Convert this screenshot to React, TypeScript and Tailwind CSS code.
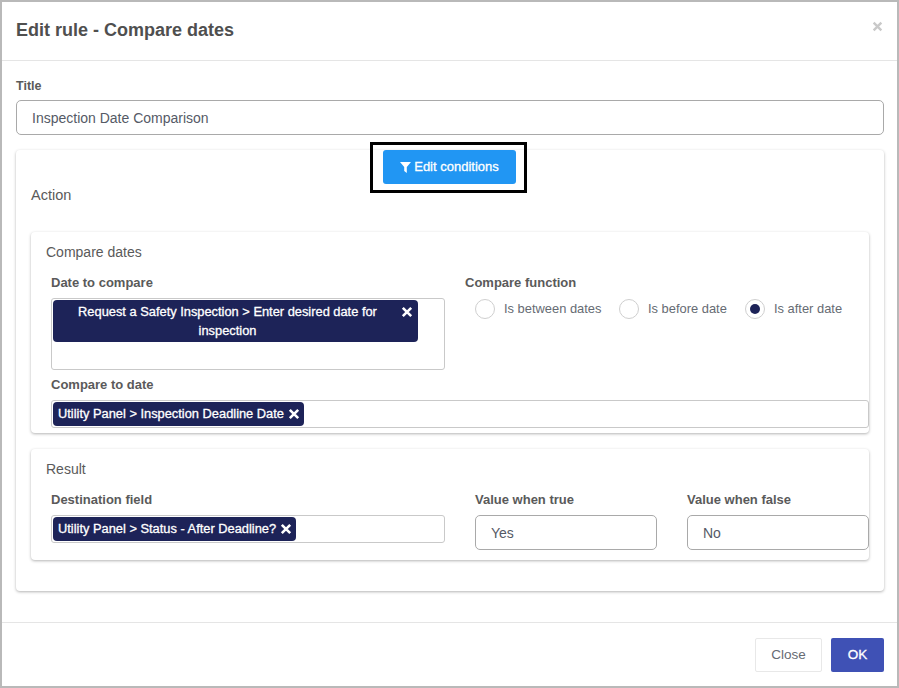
function XIcon({ size = 12, className }: { size?: number; className?: string }) {
  return (
    <svg width={size} height={size} viewBox="0 0 12 12" className={`shrink-0 ${className ?? ""}`}>
      <path d="M1.8 1.8L10.2 10.2M10.2 1.8L1.8 10.2" stroke="currentColor" strokeWidth="2.6" />
    </svg>
  );
}

function Chip({ label, wide }: { label: string; wide?: boolean }) {
  if (wide) {
    return (
      <span className="flex h-[42px] w-[365px] items-start rounded-[4px] bg-[#1d2358] pl-[7px] pt-[2px] text-center text-[12.85px] leading-[19px] text-white [-webkit-text-stroke:0.3px_white]">
        <span className="w-[335px]">{label}</span>
        <XIcon className="ml-[6px] mt-[4px]" />
      </span>
    );
  }
  return (
    <span className="flex h-[24px] items-center whitespace-nowrap rounded-[4px] bg-[#1d2358] pl-[5px] pr-[4px] text-[12.85px] text-white [-webkit-text-stroke:0.3px_white]">
      {label}
      <XIcon className="ml-[4px]" />
    </span>
  );
}

function FieldLabel({ children }: { children: string }) {
  return <div className="text-[13px] font-bold leading-[16px] text-[#5a5a5a]">{children}</div>;
}

function Radio({ label, checked, width }: { label: string; checked?: boolean; width: string }) {
  return (
    <div className={`flex items-center ${width}`}>
      <span className="flex h-[20px] w-[20px] shrink-0 items-center justify-center rounded-full border border-[#cfcfcf] bg-white">
        {checked && <span className="h-[10px] w-[10px] rounded-full bg-[#1d2358]" />}
      </span>
      <span className="ml-[9px] whitespace-nowrap text-[12.9px] text-[#666b73]">{label}</span>
    </div>
  );
}

function TextBox({ value, className }: { value: string; className: string }) {
  return (
    <div className={`flex h-[35px] items-center rounded-[5px] border border-[#a9a9a9] bg-white pl-[15px] pt-px text-[14px] text-[#555a66] ${className}`}>
      {value}
    </div>
  );
}

export default function App() {
  return (
    <div className="flex h-[688px] w-[899px] flex-col overflow-hidden border-2 border-[#b9b9b9] bg-white font-['Liberation_Sans',Arial,sans-serif]">
      {/* header */}
      <div className="flex h-[59px] shrink-0 items-start justify-between border-b border-[#e5e5e5] pl-[14px] pr-[14px]">
        <h1 className="pt-[18px] text-[18px] font-bold leading-[21px] text-[#4f4f4f]">Edit rule - Compare dates</h1>
        <XIcon size={11} className="mt-[19px] text-[#c9c9c9]" />
      </div>

      {/* body */}
      <div className="flex-1 px-[14px] pt-[17px]">
        <div className="text-[12.5px] font-bold leading-[16px] text-[#5a5a5a]">Title</div>
        <TextBox value="Inspection Date Comparison" className="mt-[6px] w-[868px]" />

        <div className="mt-[15px] h-[441px] w-[868px] rounded-[4px] bg-white px-[15px] shadow-[0_1px_3px_rgba(0,0,0,0.3)]">
          <div className="flex justify-center">
            <button className="relative -ml-px flex h-[34px] w-[133px] items-center justify-center rounded-[3px] bg-[#2196f3] text-[13px] text-white [-webkit-text-stroke:0.3px_white]">
              <svg width="11" height="11" viewBox="0 0 11 11" className="mr-[3px]">
                <path d="M0 0H11L6.8 5V11L4.2 9V5Z" fill="currentColor" />
              </svg>
              Edit conditions
              <span className="absolute -bottom-[9px] -left-[13px] -right-[11px] -top-[8px] border-[3px] border-black" />
            </button>
          </div>
          <div className="mt-[2px] text-[14.5px] leading-[18px] text-[#5a5a5a]">Action</div>

          {/* compare dates */}
          <section className="mt-[28px] h-[201px] w-[838px] rounded-[4px] bg-white pl-[15px] pt-[12px] shadow-[0_1px_3px_rgba(0,0,0,0.3)]">
            <div className="text-[14px] leading-[16px] text-[#5a5a5a]">Compare dates</div>
            <div className="ml-[5px] mt-[15px] flex">
              <div className="w-[394px]">
                <FieldLabel>Date to compare</FieldLabel>
                <div className="mt-[7px] h-[72px] rounded-[3px] border border-[#c9c9c9] p-px">
                  <Chip wide label="Request a Safety Inspection > Enter desired date for inspection" />
                </div>
              </div>
              <div className="ml-[20px]">
                <FieldLabel>Compare function</FieldLabel>
                <div className="ml-[10px] mt-[8px] flex">
                  <Radio label="Is between dates" width="w-[144px]" />
                  <Radio label="Is before date" width="w-[126px]" />
                  <Radio label="Is after date" checked width="w-[110px]" />
                </div>
              </div>
            </div>
            <div className="ml-[5px] mt-[7px]">
              <FieldLabel>Compare to date</FieldLabel>
              <div className="mt-[7px] flex h-[28px] w-[818px] items-center rounded-[3px] border border-[#c9c9c9] px-px">
                <Chip label="Utility Panel > Inspection Deadline Date" />
              </div>
            </div>
          </section>

          {/* result */}
          <section className="mt-[16px] h-[111px] w-[838px] rounded-[4px] bg-white pl-[15px] pt-[12px] shadow-[0_1px_3px_rgba(0,0,0,0.3)]">
            <div className="text-[14px] leading-[16px] text-[#5a5a5a]">Result</div>
            <div className="ml-[5px] mt-[15px] flex">
              <div className="w-[394px]">
                <FieldLabel>Destination field</FieldLabel>
                <div className="mt-[7px] flex h-[28px] items-center rounded-[3px] border border-[#c9c9c9] px-px">
                  <Chip label="Utility Panel > Status - After Deadline?" />
                </div>
              </div>
              <div className="ml-[30px] w-[182px]">
                <FieldLabel>Value when true</FieldLabel>
                <TextBox value="Yes" className="mt-[7px] w-[182px]" />
              </div>
              <div className="ml-[30px] w-[182px]">
                <FieldLabel>Value when false</FieldLabel>
                <TextBox value="No" className="mt-[7px] w-[182px]" />
              </div>
            </div>
          </section>
        </div>
      </div>

      {/* footer */}
      <div className="flex h-[64px] shrink-0 items-start justify-end gap-[9px] border-t border-[#e5e5e5] pr-[13px] pt-[15px]">
        <button className="h-[34px] w-[67px] rounded-[2px] border border-[#e8e8e8] bg-white text-[13.5px] text-[#666b73]">Close</button>
        <button className="h-[34px] w-[53px] rounded-[2px] bg-[#3f51b5] text-[13.5px] text-white [-webkit-text-stroke:0.3px_white]">OK</button>
      </div>
    </div>
  );
}
